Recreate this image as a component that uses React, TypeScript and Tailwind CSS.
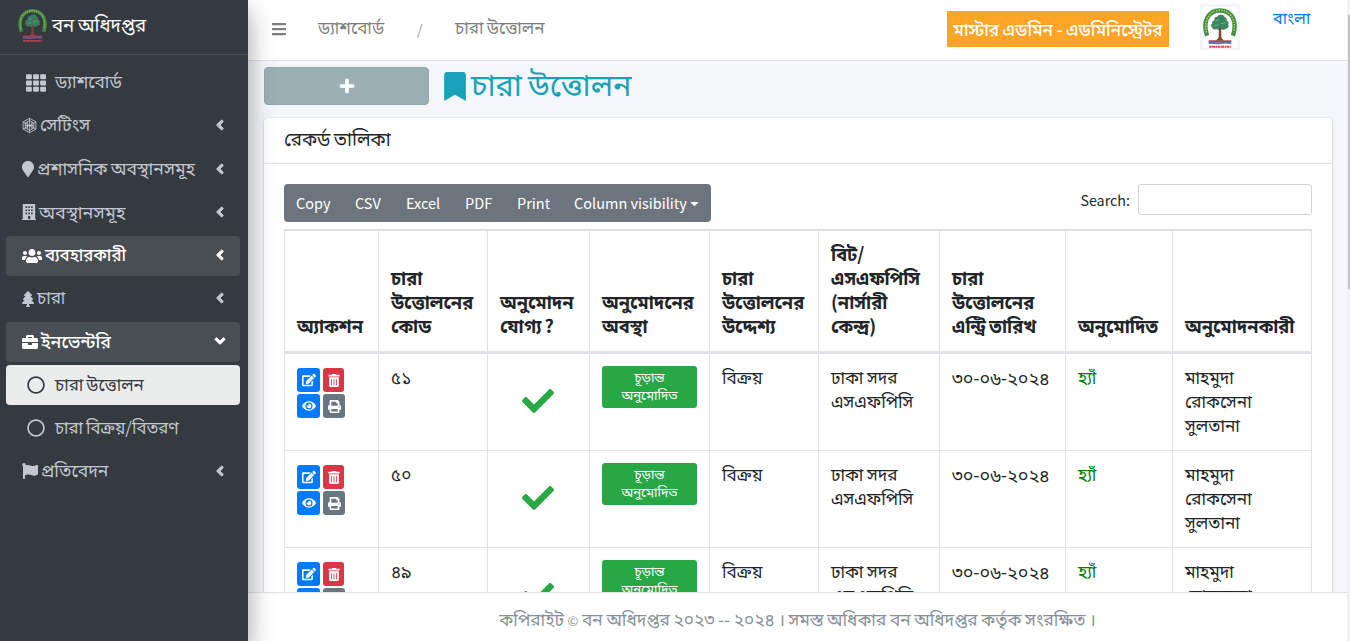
import React from "react";
import { FaTh, FaMapMarker, FaUsers, FaTree, FaBriefcase, FaFlag, FaAngleLeft, FaAngleDown, FaRegCircle, FaEdit, FaTrashAlt, FaEye, FaPrint, FaCheck, FaBookmark, FaPlus, FaBars, FaCaretDown } from "react-icons/fa";

const bn = "font-['Noto_Sans_CJK_SC','Noto_Sans_Bengali',sans-serif]";

function Emblem({ className }: { className: string }) {
  return (
    <svg viewBox="0 0 36 42" preserveAspectRatio="none" className={className}>
      <path d="M4.300 29.500C-1 14 6 3.500 18 3.500S37 14 31.700 29.500" fill="none" stroke="#3f8f45" strokeWidth="4.600" />
      <path d="M3.500 26C.8 13 7 3.300 18 3.300S35.200 13 32.500 26" fill="none" stroke="#c9d45a" strokeWidth="1.500" strokeDasharray="1.500 1.200" />
      <path d="M18 8c2.600-.6 4.600.6 5 2.400 2 .4 2.600 2 2 3.400 2 1 2.600 2.800 1.600 4.200 1.400 2-.2 4.400-2.600 4.200-1.500 1.600-3.500 1.400-4.600.6-1.400 1.200-3.600 1.200-4.600-.2-2 1-4.600.4-5-1.600-1.800-1-1.600-3.200 0-4-.6-1.600.6-3 2.200-3.200C11.400 11.600 13 10 15 10c.6-1 1.600-1.800 3-2z" fill="#3c8560" />
      <path d="M13 14.500l4-1.500M19 17l5-1M12 19l4-.8" stroke="#6fb58c" strokeWidth="1" />
      <path d="M16.800 21h2.400l.3 10.500 2.800 3h-8.800l3-3z" fill="#7d4a3a" />
      <path d="M6 35h24" stroke="#a8454d" strokeWidth="1.800" />
      <path d="M6 37c4-1.200 7 1 12 0s8-.8 12 0" fill="none" stroke="#5b6db0" strokeWidth="2" />
      <path d="M6.500 40.700h23" stroke="#d9434f" strokeWidth="2.200" strokeDasharray="2.600 .6 3.600 .5 1.600 .5" />
    </svg>
  );
}

function HexNet() {
  return (
    <svg viewBox="0 0 16 17" className="h-[17px] w-[15px]" fill="none" stroke="currentColor" strokeWidth="0.900">
      <path d="M8 .8l6.800 3.800v7.800L8 16.200l-6.800-3.800V4.600z" />
      <path d="M8 3.200l4.600 2.600v5.400L8 13.800l-4.600-2.600V5.800zM8 .8v15.400M1.200 4.600L8 8.500l6.800-3.900M1.200 12.400L8 8.500l6.800 3.900M3.400 8.500h9.200M5.500 4.500v8M10.500 4.500v8" />
    </svg>
  );
}

function Building() {
  return (
    <svg viewBox="0 0 14 16" className="h-4 w-3.5">
      <path fill="currentColor" fillRule="evenodd" d="M.8 0h12.400v15H14v1H0v-1h.8zM3.500 2.200v1.700h1.600V2.200zm2.800 0v1.700h1.600V2.200zm2.800 0v1.700h1.600V2.200zM3.500 5.400v1.700h1.600V5.400zm2.800 0v1.700h1.600V5.400zm2.800 0v1.700h1.600V5.400zM3.500 8.600v1.700h1.600V8.600zm2.800 0v1.700h1.600V8.600zm2.800 0v1.700h1.600V8.600zM6 12v3h2.200v-3z" />
    </svg>
  );
}

type NavItem = { label: string; icon: React.ReactNode; open?: boolean; state?: "hover" | "active"; kind?: "leaf"; size: string };

const nav: NavItem[] = [
  { label: "ড্যাশবোর্ড", icon: <FaTh size={20} />, kind: "leaf", size: "text-[17.3px]" },
  { label: "সেটিংস", icon: <HexNet />, size: "text-[17.6px]" },
  { label: "প্রশাসনিক অবস্থানসমূহ", icon: <FaMapMarker className="h-4 w-3" />, size: "text-[17.6px]" },
  { label: "অবস্থানসমূহ", icon: <Building />, size: "text-[18px]" },
  { label: "ব্যবহারকারী", icon: <FaUsers className="h-4 w-5" />, state: "hover", size: "text-[16.8px]" },
  { label: "চারা", icon: <FaTree className="h-4 w-3" />, size: "text-[17px]" },
  { label: "ইনভেন্টরি", icon: <FaBriefcase className="h-4 w-4" />, state: "hover", open: true, size: "text-[17.8px]" },
  { label: "চারা উত্তোলন", icon: <FaRegCircle size={18} />, kind: "leaf", state: "active", size: "text-[17px]" },
  { label: "চারা বিক্রয়/বিতরণ", icon: <FaRegCircle size={18} />, kind: "leaf", size: "text-[16.8px]" },
  { label: "প্রতিবেদন", icon: <FaFlag className="h-4 w-4" />, size: "text-[17.5px]" },
];

const rowTone = { hover: "bg-[#494e53] text-white font-medium", active: "bg-[#ebecec] text-[#343a40]", none: "text-[#c2c7d0]" };

function Sidebar() {
  return (
    <aside className="z-10 flex h-full w-[248px] shrink-0 flex-col bg-[#343a40] shadow-[0_10px_20px_rgba(0,0,0,0.2),0_14px_28px_rgba(0,0,0,0.2)]">
      <div className="flex h-[55px] shrink-0 items-center border-b border-[#4b545c] pl-[18px] text-white">
        <Emblem className="mt-[-5px] h-[34px] w-[29px] opacity-85" />
        <span className="ml-[5px] whitespace-nowrap pb-[7px] text-[18.6px] leading-6 [word-spacing:-0.5px]">বন অধিদপ্তর</span>
      </div>
      <nav className="flex flex-col gap-[3.2px] pl-1.5 pr-2 pt-[7.8px]">
        {nav.map((n) => (
          <div key={n.label} className={`flex h-10 items-center rounded ${rowTone[n.state ?? "none"]}`}>
            {n.kind === "leaf" ? (
              <span className="ml-[15px] flex w-[30px] justify-center">{n.icon}</span>
            ) : (
              <span className="ml-4 mr-px flex">{n.icon}</span>
            )}
            <span className={`whitespace-nowrap pb-[3px] leading-6 [word-spacing:-0.8px] ${n.kind === "leaf" ? "ml-[4px]" : "ml-0.5"} ${n.size}`}>{n.label}</span>
            {n.kind !== "leaf" && <span className="ml-auto mr-3 pb-px">{n.open ? <FaAngleDown size={16} stroke="currentColor" strokeWidth={30} /> : <FaAngleLeft size={16} stroke="currentColor" strokeWidth={30} />}</span>}
          </div>
        ))}
      </nav>
    </aside>
  );
}

const heads = [
  ["অ্যাকশন"],
  ["চারা", "উত্তোলনের", "কোড"],
  ["অনুমোদন", "যোগ্য ?"],
  ["অনুমোদনের", "অবস্থা"],
  ["চারা", "উত্তোলনের", "উদ্দেশ্য"],
  ["বিট/", "এসএফপিসি", "(নার্সারী", "কেন্দ্র)"],
  ["চারা", "উত্তোলনের", "এন্ট্রি তারিখ"],
  ["অনুমোদিত"],
  ["অনুমোদনকারী"],
];
const grid = "grid grid-cols-[94px_109px_102px_120px_109px_121px_126px_107px_139px] w-[1028px]";
const cell = "border-r border-[#dee2e6] pl-3 whitespace-nowrap";

function Lines({ items }: { items: string[] }) {
  return <>{items.map((t) => <div key={t} className="h-6 leading-6">{t}</div>)}</>;
}

function Row({ code }: { code: string }) {
  return (
    <div className={`${grid} h-[97px] border-b border-l border-[#dee2e6] text-[17.2px] text-[#212529] [word-spacing:-0.3px]`}>
      <div className={`${cell} pt-3.5`}>
        <div className="grid w-max grid-cols-[23px_22px] justify-items-start gap-x-[3px] gap-y-0.5 text-white">
          <span className="flex h-6 w-[23px] items-center justify-center rounded-[3px] bg-[#007bff]"><FaEdit size={14} /></span>
          <span className="flex h-6 w-[21px] items-center justify-center rounded-[3px] bg-[#dc3545]"><FaTrashAlt className="h-[13px] w-3" /></span>
          <span className="flex h-6 w-[23px] items-center justify-center rounded-[3px] bg-[#007bff]"><FaEye size={14} /></span>
          <span className="flex h-6 w-[22px] items-center justify-center rounded-[3px] bg-[#6c757d]"><FaPrint size={13} /></span>
        </div>
      </div>
      <div className={`${cell} pt-[11px]`}><Lines items={[code]} /></div>
      <div className="flex justify-center border-r border-[#dee2e6] pr-0.5 pt-[31px]"><FaCheck size={32} className="text-[#28a745]" /></div>
      <div className={`${cell} pt-3`}>
        <div className="h-[42px] w-[95px] rounded-[3px] bg-[#28a745] pt-0.5 text-center text-[13.2px] leading-[17.500px] text-white">চূড়ান্ত<br />অনুমোদিত</div>
      </div>
      <div className={`${cell} pt-[11px]`}><Lines items={["বিক্রয়"]} /></div>
      <div className={`${cell} pt-[11px]`}><Lines items={["ঢাকা সদর", "এসএফপিসি"]} /></div>
      <div className={`${cell} pt-[11px] text-[18px]`}><Lines items={["৩০-০৬-২০২৪"]} /></div>
      <div className={`${cell} pt-[11px] text-[#008000]`}><Lines items={["হ্যাঁ"]} /></div>
      <div className={`${cell} pt-[11px]`}><Lines items={["মাহমুদা", "রোকসেনা", "সুলতানা"]} /></div>
    </div>
  );
}

export default function App() {
  return (
    <div className={`flex h-[641px] w-[1350px] overflow-hidden bg-[#f4f6f9] ${bn}`}>
      <Sidebar />
      <div className="flex min-w-0 flex-1 flex-col">
        <header className="flex h-[61px] shrink-0 items-start border-b border-[#dee2e6] bg-white text-[17.1px] text-[#7f7f7f] [word-spacing:-0.5px]">
          <FaBars size={16} className="ml-[23px] mt-[21px]" />
          <span className="ml-[31px] mt-[15px] w-[68px] whitespace-nowrap leading-6">ড্যাশবোর্ড</span>
          <span className="ml-[31px] mt-[17px] w-[9px] text-[14px] leading-6 text-[#a0a0a0]">/</span>
          <span className="ml-[29px] mt-[15px] whitespace-nowrap leading-6">চারা উত্তোলন</span>
          <span className="ml-auto mt-[11px] flex h-9 w-[222px] items-center justify-center whitespace-nowrap bg-[#ffa426] pb-px text-[17.2px] font-medium text-white">মাস্টার এডমিন - এডমিনিস্ট্রেটর</span>
          <span className="ml-[31px] mt-1 flex h-[46px] w-10 items-center justify-center bg-[#f4f6f9]"><Emblem className="h-[41px] w-[34px] bg-white" /></span>
          <span className="ml-[33px] mt-[5px] w-[74px] whitespace-nowrap text-[16.200px] leading-6 text-[#007bff]">বাংলা</span>
        </header>
        <main className="min-h-0 flex-1 overflow-hidden pl-4">
          <div className="mt-1.5 flex h-[38px] items-center">
            <div className="flex h-[38px] w-[165px] items-center justify-center rounded border border-[#8fa9ae] bg-[#9bb0b5] text-white"><FaPlus size={16} stroke="currentColor" strokeWidth={20} /></div>
            <FaBookmark className="ml-[15px] h-[29px] w-[22px] text-[#17a2b8]" />
            <h1 className="ml-[5px] whitespace-nowrap pb-[7px] text-[30.6px] leading-9 text-[#17a2b8] [word-spacing:-0.8px]">চারা উত্তোলন</h1>
          </div>
          <section className="mt-[13px] h-[600px] w-[1068px] rounded bg-white shadow-[0_0_1px_rgba(0,0,0,0.125),0_1px_3px_rgba(0,0,0,0.2)]">
            <h2 className="h-[46px] border-b border-[#dfdfdf] pl-5 pt-2 text-[18.7px] leading-6 text-[#212529] [word-spacing:-0.7px]">রেকর্ড তালিকা</h2>
            <div className="pl-5 pt-5">
              <div className="flex w-[1028px] items-start">
                <div className="flex h-[38px] w-[427px] items-center rounded bg-[#6c757d] text-[14.5px] text-white">
                  <span className="ml-3 w-[59px]">Copy</span>
                  <span className="w-[51px]">CSV</span>
                  <span className="w-[59px]">Excel</span>
                  <span className="w-[52px]">PDF</span>
                  <span className="w-[57px]">Print</span>
                  <span className="w-[112px] whitespace-nowrap">Column visibility</span>
                  <FaCaretDown size={13} className="ml-0.5" />
                </div>
                <label className="ml-auto flex items-center text-[14.300px] text-[#212529]">
                  Search:
                  <input className="ml-2 h-[31px] w-[174px] rounded-[3px] border border-[#ced4da]" />
                </label>
              </div>
              <div className="mt-[7px]">
                <div className={`${grid} h-[125px] border-b-[3px] border-l border-t-2 border-[#dee2e6] text-[18.2px] font-bold text-[#212529] [word-spacing:-1px]`}>
                  {heads.map((h, i) => (
                    <div key={i} className={`${cell} flex flex-col justify-end pb-3.5`}><Lines items={h} /></div>
                  ))}
                </div>
                <Row code="৫১" />
                <Row code="৫০" />
                <Row code="৪৯" />
              </div>
            </div>
          </section>
        </main>
        <footer className="flex h-[49px] shrink-0 items-center justify-center border-t border-[#dee2e6] bg-white pt-1 text-[17.300px] text-[#869099] [word-spacing:-0.2px]">
          <span className="whitespace-nowrap">কপিরাইট <span className="text-[13px]">©</span> বন অধিদপ্তর ২০২৩ -- ২০২৪ । সমস্ত অধিকার বন অধিদপ্তর কর্তৃক সংরক্ষিত ।</span>
        </footer>
      </div>
      <div className="flex h-full w-[3px] shrink-0 justify-end bg-[#f1f1f1] pt-[15px]">
        <div className="h-[274px] w-0.5 bg-[#c1c1c1]" />
      </div>
    </div>
  );
}
